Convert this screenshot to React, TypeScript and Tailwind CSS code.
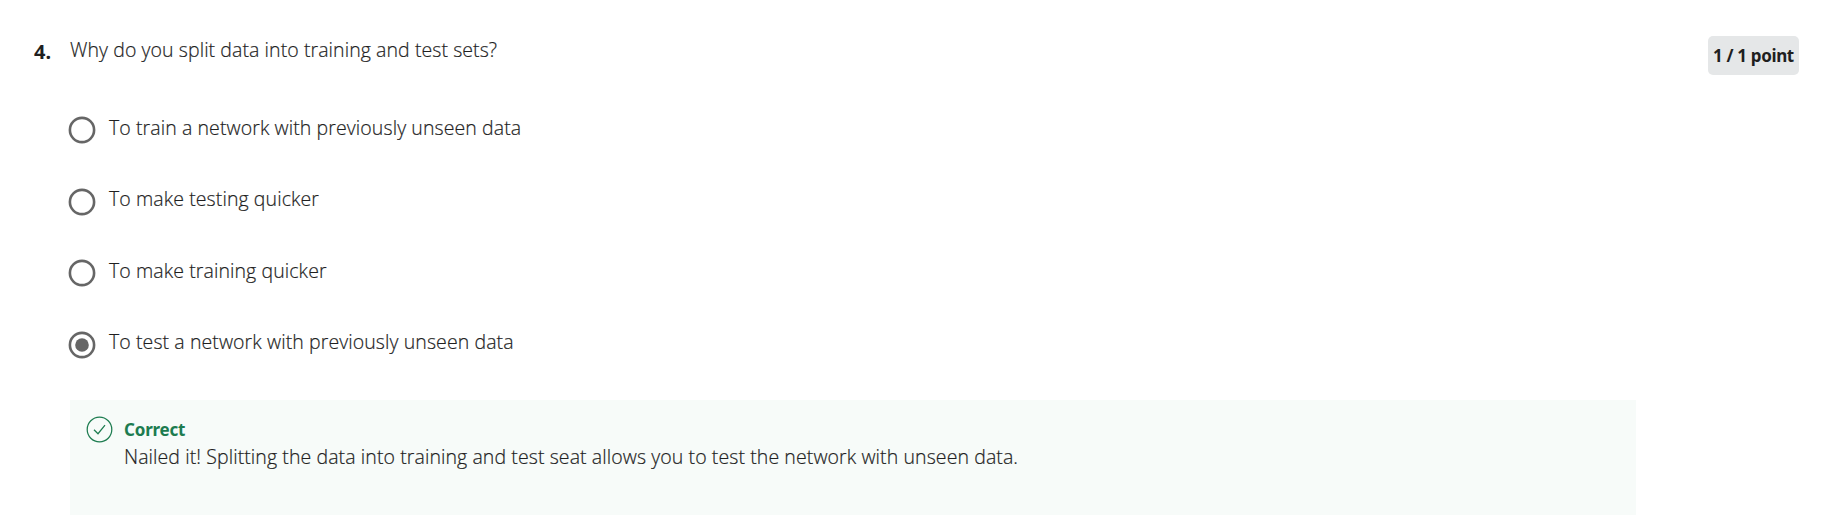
type OptionProps = { label: string; selected?: boolean };

function Option({ label, selected = false }: OptionProps) {
  return (
    <label className="flex h-[71.5px] items-start">
      <svg className="mt-[1px] h-[28px] w-[28px] shrink-0" viewBox="0 0 28 28" fill="none">
        <circle cx="14" cy="14" r="12.1" stroke="#666666" strokeWidth="2.6" />
        {selected && <circle cx="14" cy="14" r="6.8" fill="#666666" />}
      </svg>
      <span className="-mt-[0.5px] ml-[13px] text-[19.5px] leading-[26px] font-light tracking-[0.088px] whitespace-nowrap [-webkit-text-stroke:0.2px]">
        {label}
      </span>
    </label>
  );
}

const options: OptionProps[] = [
  { label: "To train a network with previously unseen data" },
  { label: "To make testing quicker" },
  { label: "To make training quicker" },
  { label: "To test a network with previously unseen data", selected: true },
];

export default function App() {
  return (
    <main className="flex h-[521px] w-[1836px] items-start bg-white pt-[36px] pl-[34px] font-['Open_Sans',sans-serif] text-[#1f1f1f]">
      <div className="w-[36px] shrink-0 pt-[2px] font-['Noto_Sans',sans-serif] text-[20px] leading-[28px] font-bold">4.</div>
      <section className="w-[1566px] shrink-0">
        <h2 className="text-[19.5px] leading-[28px] font-light tracking-[0.075px] whitespace-nowrap [-webkit-text-stroke:0.2px]">
          Why do you split data into training and test sets?
        </h2>
        <div className="mt-[51px] -ml-[2px] h-[285px]">
          {options.map((option) => (
            <Option key={option.label} {...option} />
          ))}
        </div>
        <div className="flex h-[115px] items-start bg-[#f7fbf9] pt-[16px] pl-[16px]">
          <svg className="h-[27px] w-[27px] shrink-0" viewBox="0 0 27 27" fill="none" stroke="#1d7c50" strokeWidth="1.25">
            <circle cx="13.5" cy="13.5" r="12.3" />
            <path d="M8 13.7 L12 17.7 L19 9.2" />
          </svg>
          <div className="ml-[11px]">
            <p className="font-['Noto_Sans',sans-serif] text-[17px] leading-[28px] font-bold tracking-[-0.2px] text-[#1d7c50]">Correct</p>
            <p className="-mt-px text-[19.5px] leading-[27px] font-light tracking-[0.088px] whitespace-nowrap [-webkit-text-stroke:0.2px]">
              Nailed it! Splitting the data into training and test seat allows you to test the network with unseen data.
            </p>
          </div>
        </div>
      </section>
      <div className="ml-[72px] flex h-[39px] w-[91px] shrink-0 items-center justify-center rounded-[5px] bg-[#e5e7e8] pt-px font-['Noto_Sans',sans-serif] text-[17px] font-bold tracking-[-0.35px] whitespace-nowrap">
        1 / 1 point
      </div>
    </main>
  );
}
